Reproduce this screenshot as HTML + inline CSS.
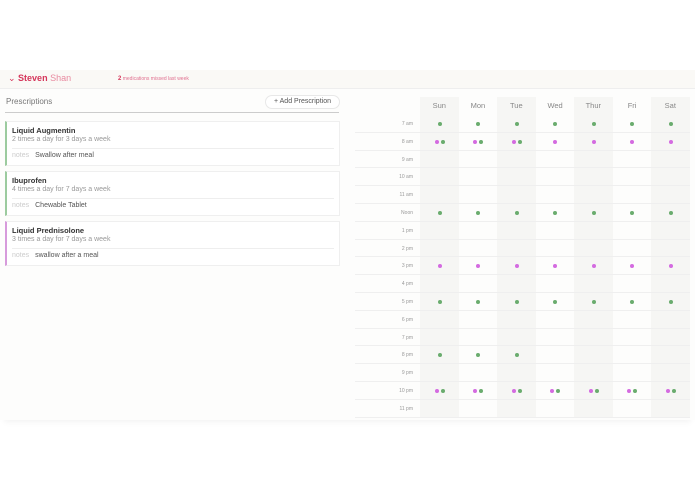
<!DOCTYPE html>
<html><head><meta charset="utf-8"><style>
*{margin:0;padding:0;box-sizing:border-box}
body{width:695px;height:494px;background:#fff;font-family:"Liberation Sans",sans-serif;position:relative;overflow:hidden}
.hdr{position:absolute;left:0;top:70px;width:695px;height:19px;background:#faf9f6;border-bottom:1px solid #eee}
.name{position:absolute;left:8px;top:73px;font-size:9px;color:#d5365b}
.name b{font-weight:bold}
.name span{color:#e88aa0}
.miss{position:absolute;left:118px;top:76px;font-size:5px;color:#e07090}
.miss b{font-size:6px;color:#d5365b}
.main{position:absolute;left:0;top:89px;width:695px;height:331px;background:#fdfdfc;box-shadow:0 6px 6px -4px rgba(0,0,0,0.05)}
.ptitle{position:absolute;left:6px;top:97px;font-size:8px;color:#777}
.btn{position:absolute;left:265px;top:95px;width:75px;height:14px;border:1px solid #e8e8e8;border-radius:7px;background:#fff;font-size:7px;color:#555;text-align:center;line-height:12px}
.rule{position:absolute;left:5px;top:112px;width:334px;height:1px;background:#ccc}
.card{position:absolute;left:5px;width:335px;height:45px;background:#fff;border:1px solid #efefef;border-left:2px solid #9ccb9f}
.card .t{position:absolute;left:5px;top:4px;font-size:7.5px;font-weight:bold;color:#333}
.card .s{position:absolute;left:5px;top:14px;font-size:7px;color:#999}
.card .l{position:absolute;left:5px;right:5px;top:26px;height:1px;background:#eee}
.card .n{position:absolute;left:5px;top:30px;font-size:7px;color:#555}
.card .n i{font-style:normal;color:#ccc;margin-right:6px}
.col{position:absolute;top:97px;width:38.6px;height:321px;background:#f6f6f4}
.day{position:absolute;top:101px;width:38.6px;text-align:center;font-size:7.5px;color:#888}
.row{position:absolute;left:355px;width:335px;height:17.8px;border-bottom:1px solid #efefef}
.lbl{position:absolute;left:355px;width:58px;text-align:right;font-size:5px;color:#999}
.d{position:absolute;width:4px;height:4px;border-radius:50%}
.g{background:#6aac6e}.p{background:#d46be0}
</style></head><body>
<div class="hdr"></div>
<div class="name">&#8964; <b>Steven</b> <span>Shan</span></div>
<div class="miss"><b>2</b> medications missed last week</div>
<div class="main"></div>
<div class="ptitle">Prescriptions</div>
<div class="btn">+ Add Prescription</div>
<div class="rule"></div>
<div class="card" style="top:121px"><div class="t">Liquid Augmentin</div><div class="s">2 times a day for 3 days a week</div><div class="l"></div><div class="n"><i>notes</i>Swallow after meal</div></div>
<div class="card" style="top:171px"><div class="t">Ibuprofen</div><div class="s">4 times a day for 7 days a week</div><div class="l"></div><div class="n"><i>notes</i>Chewable Tablet</div></div>
<div class="card" style="top:221px;border-left-color:#d79bdc"><div class="t">Liquid Prednisolone</div><div class="s">3 times a day for 7 days a week</div><div class="l"></div><div class="n"><i>notes</i>swallow after a meal</div></div>

<div class="col" style="left:420px"></div>
<div class="col" style="left:497px"></div>
<div class="col" style="left:574px"></div>
<div class="col" style="left:651px"></div>
<div class="day" style="left:420px">Sun</div>
<div class="day" style="left:458.6px">Mon</div>
<div class="day" style="left:497px">Tue</div>
<div class="day" style="left:535.8px">Wed</div>
<div class="day" style="left:574px">Thur</div>
<div class="day" style="left:612.8px">Fri</div>
<div class="day" style="left:651px">Sat</div>

<div id="g"></div>
<script>
(function(){
var labels=["7 am","8 am","9 am","10 am","11 am","Noon","1 pm","2 pm","3 pm","4 pm","5 pm","6 pm","7 pm","8 pm","9 pm","10 pm","11 pm"];
var data={0:"ggggggg",1:"bbbpppp",5:"ggggggg",8:"ppppppp",10:"ggggggg",13:"ggg....",15:"bbbbbbb"};
var h="";
for(var i=0;i<17;i++){var ty=115+i*17.8;
h+='<div class="row" style="top:'+ty+'px"></div>';
h+='<div class="lbl" style="top:'+(ty+6)+'px">'+labels[i]+'</div>';
var s=data[i];if(s){for(var j=0;j<7;j++){var c=s[j];var cx=439.5+j*38.5;var y=ty+7;
if(c=="g"||c=="p")h+='<div class="d '+c+'" style="left:'+(cx-2)+'px;top:'+y+'px"></div>';
if(c=="b"){h+='<div class="d p" style="left:'+(cx-5)+'px;top:'+y+'px"></div><div class="d g" style="left:'+(cx+1)+'px;top:'+y+'px"></div>';}}}}
document.getElementById("g").innerHTML=h;
})();
</script>
</body></html>
